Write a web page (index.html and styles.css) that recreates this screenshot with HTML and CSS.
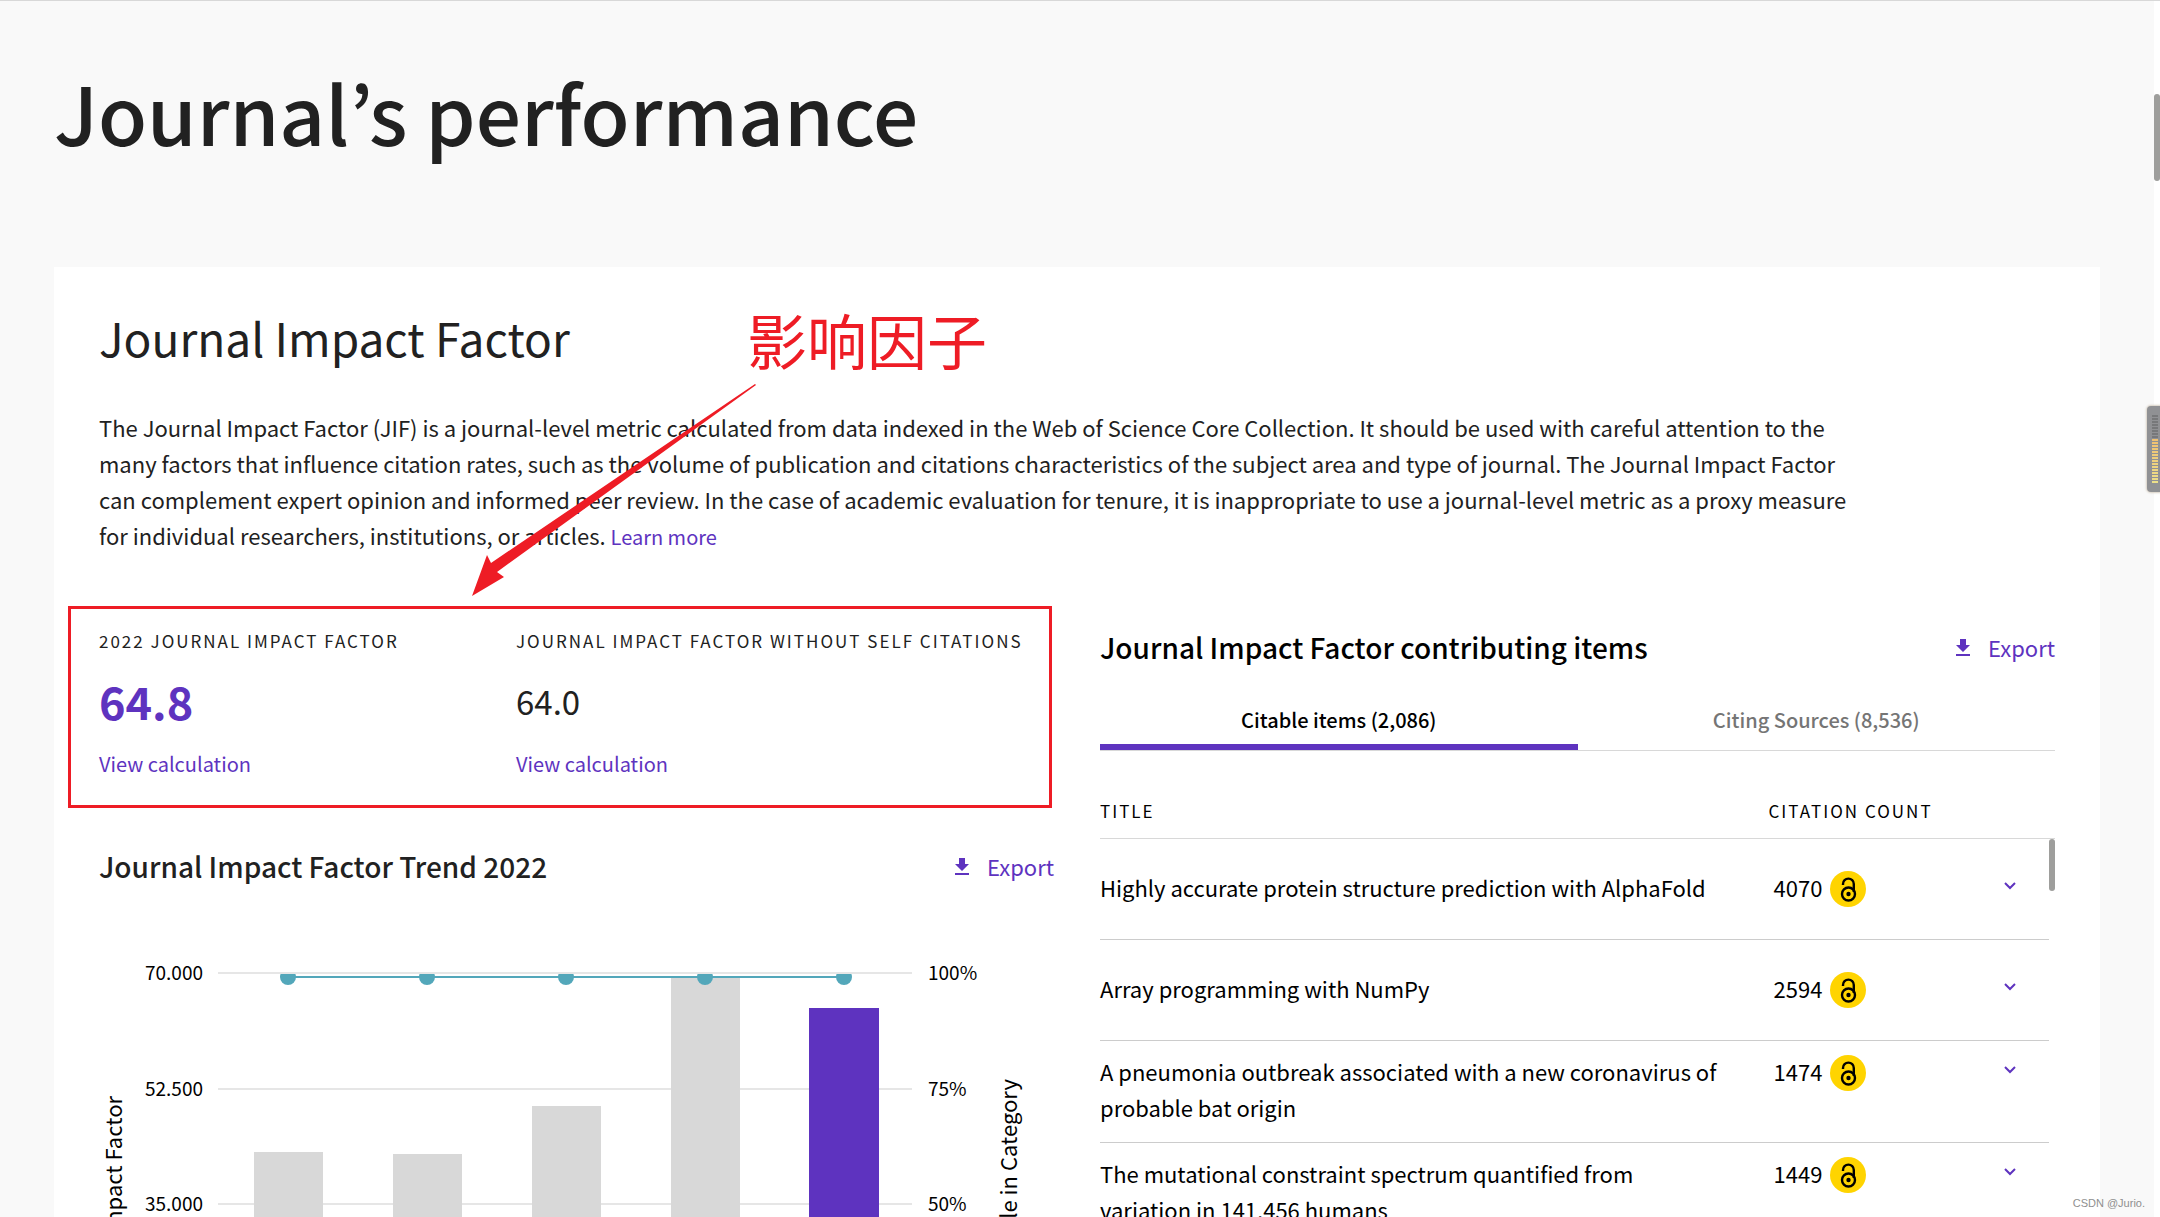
FILE: index.html
```html
<!DOCTYPE html>
<html lang="en">
<head>
  <meta charset="UTF-8">
  <title>Journal's performance</title>
  <link rel="stylesheet" href="styles.css">
</head>
<body>
  <svg class="icon-defs" aria-hidden="true">
    <symbol id="icon-download" viewBox="0 0 14 17">
      <path d="M4 0h6v6h4l-7 7-7-7h4zM0 15h14v2H0z" fill="currentColor"/>
    </symbol>
    <symbol id="icon-open-access" viewBox="0 0 36 36">
      <circle cx="18" cy="18" r="18" fill="#ffd400"/>
      <circle cx="18.500" cy="23" r="6.500" fill="none" stroke="#000" stroke-width="2.400"/>
      <circle cx="18.500" cy="23" r="2.200" fill="#000"/>
      <path d="M13 14v-1a5.300 5.300 0 0 1 10.800 0v8" fill="none" stroke="#000" stroke-width="2.400"/>
    </symbol>
    <symbol id="icon-chevron" viewBox="0 0 12 8">
      <path d="M1 1l5 5 5-5" fill="none" stroke="currentColor" stroke-width="2"/>
    </symbol>
  </svg>

  <h1>Journal’s performance</h1>

  <main class="card">
    <h2>Journal Impact Factor</h2>
    <p class="intro">The Journal Impact Factor (JIF) is a journal-level metric calculated from data indexed in the Web of Science Core Collection. It should be used with careful attention to the many factors that influence citation rates, such as the volume of publication and citations characteristics of the subject area and type of journal. The Journal Impact Factor can complement expert opinion and informed peer review. In the case of academic evaluation for tenure, it is inappropriate to use a journal-level metric as a proxy measure for individual researchers, institutions, or articles. <a href="#">Learn more</a></p>

    <div class="columns">
      <section class="column">
        <div class="stats">
          <div class="stat">
            <div class="label">2022 Journal Impact Factor</div>
            <div class="value value-main">64.8</div>
            <a href="#">View calculation</a>
          </div>
          <div class="stat">
            <div class="label">Journal Impact Factor without self citations</div>
            <div class="value">64.0</div>
            <a href="#">View calculation</a>
          </div>
          <div class="highlight"></div>
        </div>

        <div class="section-head">
          <h3>Journal Impact Factor Trend 2022</h3>
          <button class="export"><svg><use href="#icon-download"/></svg>Export</button>
        </div>

        <svg class="chart" viewBox="0 0 955 640">
          <defs>
            <clipPath id="plot"><rect x="119" y="88" width="694" height="462"/></clipPath>
          </defs>
          <g class="grid">
            <path d="M119 87h694M119 203h694M119 318h694M119 434h694M119 549h694"/>
          </g>
          <g class="bars">
            <rect x="155" y="266" width="69" height="283"/>
            <rect x="294" y="268" width="69" height="281"/>
            <rect x="433" y="220" width="69" height="329"/>
            <rect x="572" y="91" width="69" height="458"/>
            <rect class="current" x="710" y="122" width="70" height="427"/>
          </g>
          <g class="percentile" clip-path="url(#plot)">
            <path d="M189 91h556"/>
            <circle cx="189" cy="91" r="8"/>
            <circle cx="328" cy="91" r="8"/>
            <circle cx="467" cy="91" r="8"/>
            <circle cx="606" cy="91" r="8"/>
            <circle cx="745" cy="91" r="8"/>
          </g>
          <g class="ticks ticks-left">
            <text x="104" y="94">70.000</text>
            <text x="104" y="210">52.500</text>
            <text x="104" y="325">35.000</text>
            <text x="104" y="441">17.500</text>
            <text x="104" y="556">0.000</text>
          </g>
          <g class="ticks">
            <text x="829" y="94">100%</text>
            <text x="829" y="210">75%</text>
            <text x="829" y="325">50%</text>
            <text x="829" y="441">25%</text>
            <text x="829" y="556">0%</text>
          </g>
          <text class="axis-title" transform="translate(23 210) rotate(-90)">Journal Impact Factor</text>
          <text class="axis-title" transform="translate(918 193) rotate(-90)">JIF Percentile in Category</text>
        </svg>
      </section>

      <section class="column column-right">
        <div class="section-head">
          <h3>Journal Impact Factor contributing items</h3>
          <button class="export"><svg><use href="#icon-download"/></svg>Export</button>
        </div>

        <div class="tabs">
          <button class="tab active">Citable items (2,086)</button>
          <button class="tab">Citing Sources (8,536)</button>
        </div>

        <div class="table-box">
          <table>
            <thead>
              <tr><th class="col-title">Title</th><th colspan="2">Citation count</th></tr>
            </thead>
            <tbody>
              <tr class="one-line">
                <td>Highly accurate protein structure prediction with AlphaFold</td>
                <td class="count">4070<svg><use href="#icon-open-access"/></svg></td>
                <td class="more"><button aria-label="Show details"><svg><use href="#icon-chevron"/></svg></button></td>
              </tr>
              <tr class="one-line">
                <td>Array programming with NumPy</td>
                <td class="count">2594<svg><use href="#icon-open-access"/></svg></td>
                <td class="more"><button aria-label="Show details"><svg><use href="#icon-chevron"/></svg></button></td>
              </tr>
              <tr>
                <td>A pneumonia outbreak associated with a new coronavirus of probable bat origin</td>
                <td class="count">1474<svg><use href="#icon-open-access"/></svg></td>
                <td class="more"><button aria-label="Show details"><svg><use href="#icon-chevron"/></svg></button></td>
              </tr>
              <tr>
                <td>The mutational constraint spectrum quantified from variation in 141,456 humans</td>
                <td class="count">1449<svg><use href="#icon-open-access"/></svg></td>
                <td class="more"><button aria-label="Show details"><svg><use href="#icon-chevron"/></svg></button></td>
              </tr>
            </tbody>
          </table>
          <div class="table-scroll"></div>
        </div>
      </section>
    </div>

    <!-- annotation -->
    <div class="note" lang="zh-CN">影响因子</div>
    <svg class="arrow" viewBox="0 0 284 212">
      <path d="M283 0l1 1L25 188l7 5L0 212l15-41 4 8z"/>
    </svg>
  </main>

  <div class="page-scroll"></div>
  <div class="meter"><div class="meter-bars"></div></div>
  <div class="watermark">CSDN @Jurio.</div>
</body>
</html>
```
FILE: styles.css
```css
* {
  box-sizing: border-box;
}

body {
  margin: 0;
  height: 100vh;
  overflow: hidden;
  position: relative;
  padding: 50px 60px 0 54px;
  border-top: 1px solid #d8d8d8;
  background: #f9f9f9;
  color: #212121;
  font-family: "Noto Sans CJK KR", "Noto Sans", sans-serif;
  font-size: 22px;
  line-height: 36px;
}

h1, h2, h3, p {
  margin: 0;
}

a {
  color: #5e33bf;
  font-size: 20px;
  line-height: 20px;
  text-decoration: none;
}

button {
  border: 0;
  padding: 0;
  background: none;
  font-family: inherit;
  cursor: pointer;
}

.icon-defs {
  position: absolute;
  width: 0;
  height: 0;
}

h1 {
  margin-bottom: 96px;
  font-size: 80px;
  font-weight: 500;
  line-height: 120px;
}

.card {
  position: relative;
  padding: 37px 45px;
  background: #fff;
}

h2 {
  margin-bottom: 39px;
  font-size: 46px;
  font-weight: 400;
  line-height: 66px;
}

.intro {
  max-width: 1770px;
}

.columns {
  display: flex;
  gap: 46px;
  margin-top: 53px;
}

.column {
  flex: 1;
  min-width: 0;
}

.column-right {
  padding-top: 21px;
  color: #000;
}

.stats {
  position: relative;
  display: flex;
  padding: 23px 0 29px;
  margin-bottom: 38px;
}

.stat {
  display: flex;
  flex-direction: column;
  gap: 24px;
  white-space: nowrap;
}

.stat:first-child {
  width: 417px;
}

.stat a {
  line-height: 30px;
}

.highlight {
  position: absolute;
  inset: 0 2px 0 -31px;
  border: 3px solid #ee1c25;
}

.label, th {
  font-size: 17px;
  font-weight: 400;
  line-height: 24px;
  letter-spacing: 2px;
  text-transform: uppercase;
}

.value {
  font-size: 33px;
  line-height: 48px;
}

.value-main {
  color: #5e33bf;
  font-size: 45px;
  font-weight: 600;
}

.section-head {
  display: flex;
  justify-content: space-between;
  align-items: center;
}

h3 {
  font-size: 28px;
  font-weight: 500;
  line-height: 40px;
}

.export {
  display: flex;
  align-items: center;
  gap: 18px;
  color: #5e33bf;
  font-size: 22px;
}

.export svg {
  width: 14px;
  height: 17px;
}

.chart {
  display: block;
  width: 100%;
}

.grid {
  stroke: #e6e6e6;
  stroke-width: 2;
}

.bars {
  fill: #d8d8d8;
}

.bars .current {
  fill: #5e33bf;
}

.percentile {
  fill: #53a7ba;
  stroke: #53a7ba;
  stroke-width: 2;
}

.percentile circle {
  stroke: none;
}

.ticks {
  fill: #000;
  font-size: 19px;
}

.ticks-left {
  text-anchor: end;
}

.axis-title {
  fill: #000;
  font-size: 22px;
  text-anchor: end;
}

.tabs {
  display: flex;
  margin-top: 39px;
  border-bottom: 1px solid #d8d8d8;
}

.tab {
  flex: 1;
  padding-bottom: 10px;
  border-bottom: 6px solid transparent;
  color: #757575;
  font-size: 20px;
  font-weight: 500;
  line-height: 28px;
}

.tab.active {
  border-color: #5e33bf;
  color: #000;
}

.table-box {
  position: relative;
  margin-top: 48px;
}

table {
  width: 100%;
  border-spacing: 0;
}

th {
  padding: 0 0 15px;
  border-bottom: 1px solid #d8d8d8;
  text-align: left;
}

.col-title {
  width: 70%;
}

td {
  padding: 12px 40px 17px 0;
  border-bottom: 1px solid #ccc;
  vertical-align: top;
}

.one-line td {
  padding-top: 30px;
  padding-bottom: 32px;
}

.count {
  padding-left: 5px;
  white-space: nowrap;
}

.count svg {
  width: 36px;
  height: 36px;
  margin-top: 2px;
  margin-left: 8px;
  vertical-align: top;
}

td.more {
  padding-right: 39px;
  text-align: right;
}

.more button {
  display: flex;
  align-items: center;
  height: 34px;
  margin-left: auto;
  color: #5e33bf;
}

.more svg {
  width: 12px;
  height: 8px;
}

.table-scroll {
  position: absolute;
  top: 40px;
  right: 0;
  bottom: 0;
  width: 6px;
  background: #fff;
}

.table-scroll::before {
  content: "";
  display: block;
  height: 52px;
  border-radius: 3px;
  background: #9e9e9c;
}

.note {
  position: absolute;
  top: 36px;
  left: 693px;
  color: #ee1c25;
  font-family: "Noto Sans CJK SC", sans-serif;
  font-size: 60px;
  line-height: 72px;
}

.arrow {
  position: absolute;
  top: 117px;
  left: 418px;
  width: 284px;
  height: 212px;
  fill: #ee1c25;
}

.page-scroll {
  position: absolute;
  top: 0;
  right: 0;
  bottom: 0;
  width: 6px;
  padding-top: 93px;
  background: #fff;
}

.page-scroll::before {
  content: "";
  display: block;
  height: 87px;
  border-radius: 3px;
  background: #9e9e9c;
}

.meter {
  position: absolute;
  top: 405px;
  right: 0;
  width: 13px;
  height: 86px;
  padding: 9px 2px 9px 5px;
  border-radius: 4px 0 0 4px;
  background: #909194;
  box-shadow: 0 0 2px 1px #d8d0c4;
}

.meter-bars {
  height: 68px;
  background:
    repeating-linear-gradient(transparent 0 2px, #909194 2px 3px),
    linear-gradient(#77787a 24px, #f0c070 24px, #ece08a 68px);
}

.watermark {
  position: absolute;
  right: 15px;
  bottom: 5px;
  color: #8f8f8f;
  font-family: "Liberation Sans", Arial, sans-serif;
  font-size: 11px;
  line-height: 18px;
}
```
